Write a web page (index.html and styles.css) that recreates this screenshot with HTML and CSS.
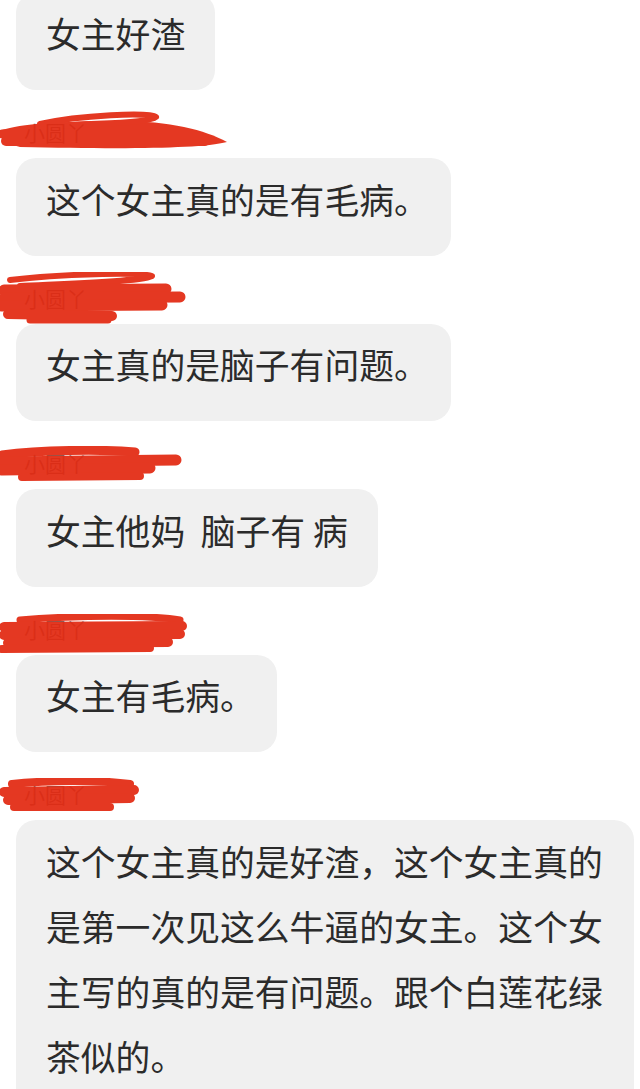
FILE: index.html
```html
<!DOCTYPE html>
<html lang="zh-CN">
<head>
<meta charset="utf-8">
<title>聊天记录</title>
<link rel="stylesheet" href="styles.css">
</head>
<body>
<div class="chat">
  <div class="bubble">女主好渣</div>

  <div class="name">小圆丫
    <svg class="scribble s1" width="240" height="44" viewBox="0 0 240 44">
      <path class="fill" d="M2 20 C 20 14, 60 11, 120 11 C 170 11, 205 20, 227 32 C 200 39, 120 39, 20 37 C 10 35, 4 30, 2 25 Z"/>
      <path d="M40 14 C 80 5, 150 2, 156 7 C 150 13, 100 13, 60 16" stroke-width="6"/>
      <path d="M2 24 L 40 22" stroke-width="9"/>
      <path d="M6 31 L 205 31" stroke-width="10"/>
    </svg>
  </div>
  <div class="bubble tight">这个女主真的是有毛病。</div>

  <div class="name">小圆丫
    <svg class="scribble s2" width="200" height="54" viewBox="0 0 200 54">
      <path d="M10 8 C 60 2, 140 0, 152 4 C 140 10, 60 12, 20 14" stroke-width="6"/>
      <path d="M4 18 L 166 17" stroke-width="11"/>
      <path d="M4 26 L 180 25" stroke-width="11"/>
      <path d="M2 34 L 162 33" stroke-width="11"/>
      <path d="M8 42 L 112 44" stroke-width="10"/>
      <path d="M30 48 L 108 48" stroke-width="7"/>
    </svg>
  </div>
  <div class="bubble tight">女主真的是脑子有问题。</div>

  <div class="name">小圆丫
    <svg class="scribble s3" width="200" height="40" viewBox="0 0 200 40">
      <path d="M2 9 C 40 4, 100 3, 135 6" stroke-width="9"/>
      <path d="M2 16 L 176 14" stroke-width="11"/>
      <path d="M2 24 L 150 22" stroke-width="11"/>
      <path d="M22 31 L 140 30" stroke-width="8"/>
    </svg>
  </div>
  <div class="bubble">女主他妈&nbsp; 脑子有 病</div>

  <div class="name">小圆丫
    <svg class="scribble s4" width="200" height="42" viewBox="0 0 200 42">
      <path d="M20 6 C 80 1, 150 1, 180 6" stroke-width="7"/>
      <path d="M4 13 L 182 12" stroke-width="10"/>
      <path d="M4 21 L 180 20" stroke-width="10"/>
      <path d="M8 29 L 168 28" stroke-width="10"/>
      <path d="M2 35 L 150 34" stroke-width="8"/>
    </svg>
  </div>
  <div class="bubble tight">女主有毛病。</div>

  <div class="name">小圆丫
    <svg class="scribble s5" width="150" height="36" viewBox="0 0 150 36">
      <path d="M12 6 C 50 2, 100 2, 130 6" stroke-width="8"/>
      <path d="M4 14 L 134 12" stroke-width="10"/>
      <path d="M8 22 L 130 20" stroke-width="10"/>
      <path d="M14 29 L 110 29" stroke-width="8"/>
    </svg>
  </div>
  <div class="bubble">这个女主真的是好渣，这个女主真的是第一次见这么牛逼的女主。这个女主写的真的是有问题。跟个白莲花绿茶似的。</div>
</div>
</body>
</html>
```

FILE: styles.css
```css
html, body {
  margin: 0;
  padding: 0;
  background: #ffffff;
}

body {
  font-family: "Noto Sans CJK SC", "Noto Sans", sans-serif;
  overflow: hidden;
}

.chat {
  display: flex;
  flex-direction: column;
  align-items: flex-start;
  padding-left: 16px;
  margin-top: -7.5px;
}

.bubble {
  box-sizing: border-box;
  max-width: 618px;
  padding: 8.5px 30px 24px 30px;
  background: #f0f0f0;
  border-radius: 20px;
  color: #2b2b2b;
  font-size: 34.8px;
  line-height: 65px;
}

.bubble.tight {
  padding-right: 22px;
}

.name {
  position: relative;
  height: 24px;
  margin: 30px 0 14px 0;
  padding-left: 8px;
  font-size: 21px;
  line-height: 24px;
  color: #6e6e6e;
}

.scribble {
  position: absolute;
  left: -16px;
  opacity: 0.93;
}

.scribble path {
  fill: none;
  stroke: #e32a12;
  stroke-linecap: round;
  stroke-linejoin: round;
}

.scribble path.fill {
  fill: #e32a12;
  stroke: none;
}

.s1 { top: -10px; }
.s2 { top: -14px; }
.s3 { top: -5px; }
.s4 { top: -3px; }
.s5 { top: -4px; }
```
